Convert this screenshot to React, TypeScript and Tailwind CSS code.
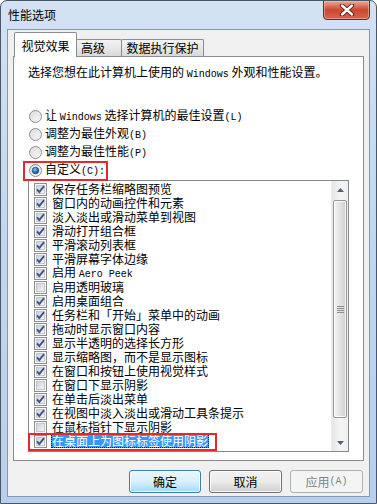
import React from "react";

const M = ({ children }: { children: React.ReactNode }) => (
  <span className="font-['Liberation_Mono',monospace] text-[10px]">{children}</span>
);

const Radio = ({ checked }: { checked?: boolean }) => (
  <svg width="13" height="13" viewBox="0 0 13 13" className="shrink-0">
    <defs>
      <linearGradient id="rg" x1="0" y1="0" x2="1" y2="1">
        <stop offset="0" stopColor="#d8d8d8" />
        <stop offset="1" stopColor="#ffffff" />
      </linearGradient>
      <radialGradient id="rd" cx="0.4" cy="0.35" r="0.7">
        <stop offset="0" stopColor="#8fd0f5" />
        <stop offset="0.5" stopColor="#2a7fc6" />
        <stop offset="1" stopColor="#153f73" />
      </radialGradient>
    </defs>
    <circle cx="6.5" cy="6.5" r="6" fill="url(#rg)" stroke="#8c8c8c" />
    <circle cx="6.5" cy="6.5" r="4" fill="none" stroke="#e6e6e6" />
    {checked && <circle cx="6.5" cy="6.5" r="3.3" fill="url(#rd)" stroke="#1c3f66" strokeWidth="0.6" />}
  </svg>
);

const Check = ({ checked }: { checked?: boolean }) => (
  <svg width="13" height="13" viewBox="0 0 13 13" className="shrink-0">
    <defs>
      <linearGradient id="cg" x1="0" y1="0" x2="1" y2="1">
        <stop offset="0" stopColor="#cbcfd5" />
        <stop offset="1" stopColor="#f7f7f7" />
      </linearGradient>
    </defs>
    <rect x="0.5" y="0.5" width="12" height="12" fill="#f6f6f6" stroke="#8e8f8f" />
    <rect x="2.5" y="2.5" width="8" height="8" fill="url(#cg)" stroke="#c4c8cd" />
    {checked && (
      <path d="M3 6.3 L5.3 9 L10 3.2" fill="none" stroke="#3c5187" strokeWidth="1.9" strokeLinejoin="miter" />
    )}
  </svg>
);

const items: [React.ReactNode, boolean][] = [
  ["保存任务栏缩略图预览", true],
  ["窗口内的动画控件和元素", true],
  ["淡入淡出或滑动菜单到视图", true],
  ["滑动打开组合框", true],
  ["平滑滚动列表框", true],
  ["平滑屏幕字体边缘", true],
  [<>启用 <M>Aero Peek</M></>, true],
  ["启用透明玻璃", false],
  ["启用桌面组合", true],
  ["任务栏和「开始」菜单中的动画", true],
  ["拖动时显示窗口内容", true],
  ["显示半透明的选择长方形", true],
  ["显示缩略图，而不是显示图标", true],
  ["在窗口和按钮上使用视觉样式", true],
  ["在窗口下显示阴影", false],
  ["在单击后淡出菜单", true],
  ["在视图中淡入淡出或滑动工具条提示", true],
  ["在鼠标指针下显示阴影", false],
];

export default function App() {
  return (
    <div className="w-[377px] h-[504px] flex flex-col border border-[#4a5566] rounded-t-[7px] bg-gradient-to-b from-[#d3e2f3] via-[#c1d6ee] to-[#b9d0ec] font-['Noto_Sans_CJK_SC',sans-serif] text-[12px] leading-[14px] text-black overflow-hidden">
      {/* title bar */}
      <div className="h-[28px] flex shrink-0">
        <span className="ml-[7px] mt-[7px] text-[12px] leading-[14px] text-black">性能选项</span>
        <div className="ml-auto mr-[6px] -mt-px w-[47px] h-[20px] rounded-b-[4px] border border-[#6b2a22] bg-gradient-to-b from-[#e9a795] via-[#c9462f] to-[#d7664c] flex items-center justify-center shadow-[inset_0_0_0_1px_rgba(255,200,190,0.5)]">
          <svg width="16" height="12" viewBox="0 0 16 12">
            <path d="M3 1.5 L13 10.5 M13 1.5 L3 10.5" stroke="#4a1a14" strokeWidth="4.2" strokeLinecap="round" />
            <path d="M3 1.5 L13 10.5 M13 1.5 L3 10.5" stroke="#ffffff" strokeWidth="2.4" strokeLinecap="round" />
          </svg>
        </div>
      </div>

      {/* client area */}
      <div className="mx-[6px] h-[468px] shrink-0 border border-[#8497b3] bg-[#f0f0f0] flex flex-col">
        {/* tabs */}
        <div className="h-[26px] flex items-end pl-[6px]">
          <div className="relative z-10 -mb-px h-[25px] w-[63px] bg-white border border-b-0 border-[#898c95] rounded-t-[2px] flex justify-center pt-[6px] text-[12px]">
            视觉效果
          </div>
          <div className="h-[17px] w-[46px] -ml-px border border-b-0 border-[#898c95] rounded-t-[2px] bg-gradient-to-b from-[#f3f3f3] via-[#e8e8e8] to-[#d9d9d9] pl-[4px] pt-[1px]">
            高级
          </div>
          <div className="h-[17px] w-[83px] -ml-px border border-b-0 border-[#898c95] rounded-t-[2px] bg-gradient-to-b from-[#f3f3f3] via-[#e8e8e8] to-[#d9d9d9] flex justify-center pt-[1px]">
            数据执行保护
          </div>
        </div>

        {/* panel */}
        <div className="mx-[5px] h-[405px] border border-[#898c95] bg-white flex flex-col">
          <div className="mt-[8px] ml-[14px] whitespace-nowrap">
            选择您想在此计算机上使用的 <M>Windows</M> 外观和性能设置。
          </div>

          <div className="mt-[25px] ml-[15px] flex flex-col">
            <div className="h-[18px] flex items-center gap-[3px]">
              <Radio />
              <span>让 <M>Windows</M> 选择计算机的最佳设置<M>(L)</M></span>
            </div>
            <div className="h-[18px] flex items-center gap-[3px]">
              <Radio />
              <span>调整为最佳外观<M>(B)</M></span>
            </div>
            <div className="h-[18px] flex items-center gap-[3px]">
              <Radio />
              <span>调整为最佳性能<M>(P)</M></span>
            </div>
            <div className="relative h-[18px] flex items-center gap-[3px]">
              <Radio checked />
              <span>自定义<M>(C):</M></span>
              <div className="absolute z-20 left-[-6px] top-0 w-[85px] h-[20px] border-2 border-[#e8262e]" />
            </div>
          </div>

          {/* listbox */}
          <div className="mt-[1px] ml-[14px] w-[321px] h-[272px] border border-[#828790] flex bg-white">
            <div className="flex-1 flex flex-col pt-[1px]">
              {items.map(([label, checked], i) => (
                <div key={i} className="h-[14px] flex items-center pl-[5px] whitespace-nowrap">
                  <Check checked={checked} />
                  <span className="ml-[4px] px-[1px]">{label}</span>
                </div>
              ))}
              <div className="relative h-[14px] flex items-center pl-[5px] whitespace-nowrap">
                <Check checked />
                <span className="ml-[4px] px-[1px] bg-[#3399ff] text-white outline-1 outline-dotted outline-[#1a1a1a] -outline-offset-1">
                  在桌面上为图标标签使用阴影
                </span>
                <div className="absolute z-20 left-[-1px] top-[-1px] w-[189px] h-[18px] border-2 border-[#e8262e]" />
              </div>
            </div>

            {/* scrollbar */}
            <div className="w-[17px] flex flex-col bg-gradient-to-r from-[#e6e6e6] via-[#f4f4f4] to-[#f0f0f0] border-l border-[#ececec]">
              <div className="h-[17px] flex items-center justify-center">
                <svg width="7" height="4" viewBox="0 0 7 4">
                  <path d="M0 4 L3.5 0 L7 4 Z" fill="#4d6185" />
                </svg>
              </div>
              <div className="flex-1 flex flex-col">
                <div className="mt-[2px] mx-[1px] h-[218px] rounded-[2px] border border-[#979797] bg-gradient-to-r from-[#f2f2f2] via-[#e2e2e2] to-[#cfcfcf] shadow-[inset_0_0_0_1px_rgba(255,255,255,0.8)] flex items-center justify-center">
                  <div className="flex flex-col gap-[1px]">
                    <div className="w-[7px] h-px bg-[#8f8f8f]" />
                    <div className="w-[7px] h-px bg-[#8f8f8f]" />
                    <div className="w-[7px] h-px bg-[#8f8f8f]" />
                    <div className="w-[7px] h-px bg-[#8f8f8f]" />
                  </div>
                </div>
              </div>
              <div className="h-[17px] flex items-center justify-center">
                <svg width="7" height="4" viewBox="0 0 7 4">
                  <path d="M0 0 L3.5 4 L7 0 Z" fill="#4d6185" />
                </svg>
              </div>
            </div>
          </div>
        </div>

        {/* buttons */}
        <div className="mt-[9px] flex justify-end gap-[8px] pr-[6px]">
          <div className="w-[72px] h-[23px] rounded-[3px] border border-[#3c7fb1] bg-gradient-to-b from-[#eaf6fd] via-[#d9f0fc] to-[#a7d9f5] shadow-[inset_0_0_0_1px_rgba(255,255,255,0.8)] flex items-center justify-center">
            确定
          </div>
          <div className="w-[73px] h-[23px] rounded-[3px] border border-[#707070] bg-gradient-to-b from-[#f2f2f2] via-[#ebebeb] to-[#cfcfcf] shadow-[inset_0_0_0_1px_rgba(255,255,255,0.8)] flex items-center justify-center">
            取消
          </div>
          <div className="w-[73px] h-[23px] rounded-[3px] border border-[#adb2b5] bg-[#f4f4f4] flex items-center justify-center text-[#838383]">
            应用<M>(A)</M>
          </div>
        </div>
      </div>
    </div>
  );
}
